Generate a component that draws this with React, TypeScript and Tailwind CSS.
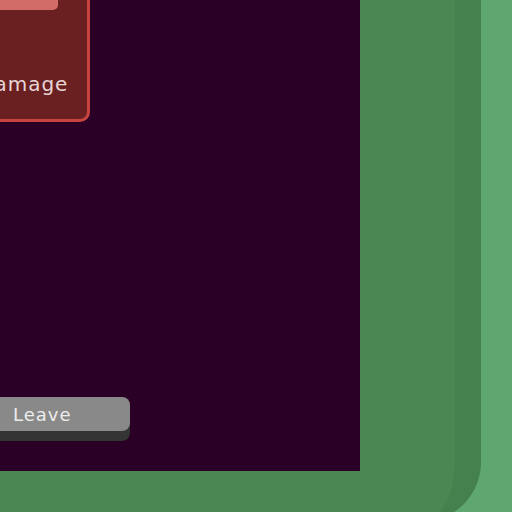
export default function App() {
  return (
    <div className="w-[512px] h-[512px] overflow-hidden bg-[#5fa771]">
      <div className="w-[481px] h-[522px] rounded-br-[60px] bg-[#4a8753] border-r-[26px] border-[#45814f]">
        <div
          className="relative w-[360px] h-[471px] bg-[#2a0026] overflow-hidden"
          style={{ fontFamily: '"DejaVu Sans", sans-serif' }}
        >
          <div className="-ml-[60px] w-[150px] h-[122px] rounded-br-[10px] border-[3px] border-t-0 border-[#c8453f] bg-[#6a2021] flex flex-col">
            <div className="ml-[57px] w-[58px] h-[10px] rounded-br-[5px] bg-[#d26c68]" />
            <p className="mt-auto mb-[25px] ml-[35px] text-[20px] leading-none tracking-[1px] text-[#e6d6d6]">
              Damage
            </p>
          </div>

          <div className="mt-[275px] w-[130px] rounded-r-[8px] bg-[#343434] pb-[10px]">
            <button className="w-full h-[34px] rounded-r-[8px] bg-[#898989] pl-[13px] text-left text-[18px] tracking-[1px] text-[#ececec]">
              Leave
            </button>
          </div>
        </div>
      </div>
    </div>
  )
}
